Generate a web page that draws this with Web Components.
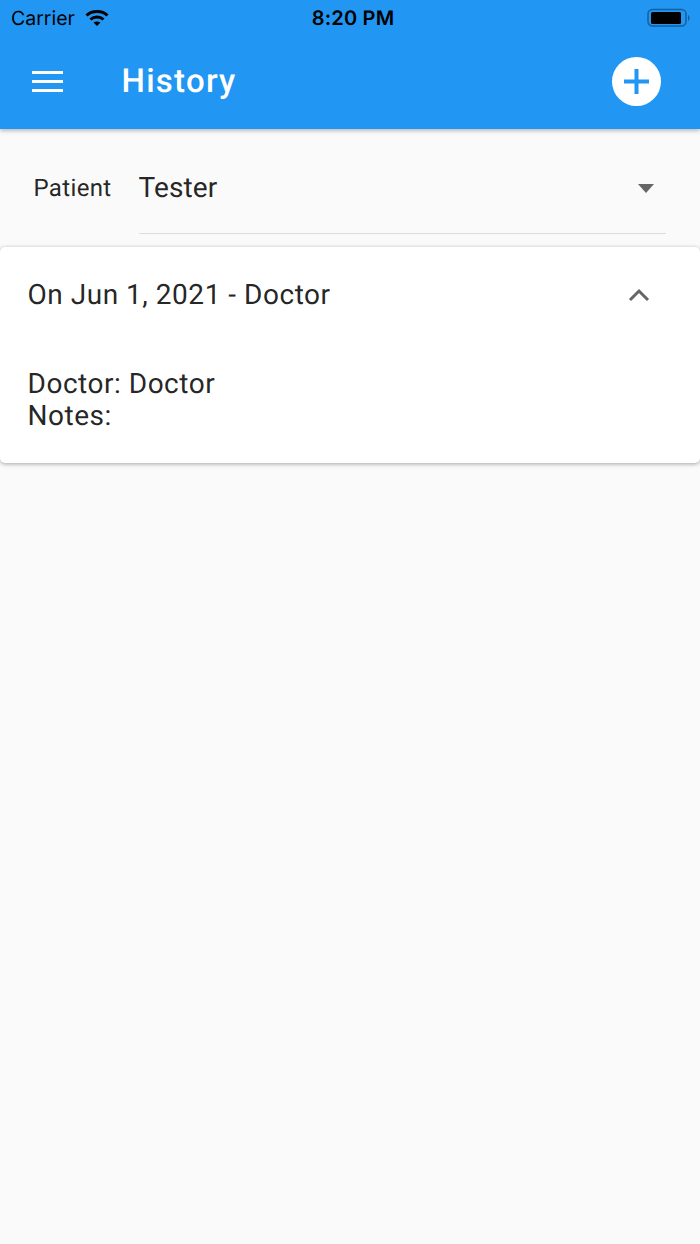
<!DOCTYPE html>
<html><head><meta charset="utf-8"><style>
html,body{margin:0;padding:0;height:100%;background:#fafafa;overflow:hidden}
body{width:700px;height:1244px;font-family:"Roboto",sans-serif;color:rgba(0,0,0,.87);text-rendering:geometricPrecision}
</style></head><body>
<app-bar></app-bar>
<patient-select></patient-select>
<history-card></history-card>
<script>
function el(name,html){customElements.define(name,class extends HTMLElement{constructor(){super();this.attachShadow({mode:'open'}).innerHTML=html}})}
el('status-bar',`<style>
:host{display:flex;height:36px;align-items:center;justify-content:space-between;padding:0 9px 0 11px;color:#000;position:relative}
.l{display:flex;align-items:center;gap:10px;font:400 19.500px "Inter","Liberation Sans",sans-serif}
.t{position:absolute;left:0;right:-6px;text-align:center;font:600 20px "Inter","Liberation Sans",sans-serif;letter-spacing:.2px}
svg{display:block}
</style>
<div class="l"><span>Carrier</span><svg width="24" height="18" viewBox="0 0 24 18"><g fill="none" stroke="#000" stroke-width="3"><path d="M1.500 6.500C7 1.300 17 1.300 22.500 6.500"/><path d="M5.500 10.500C9 7.300 15 7.300 18.500 10.500"/></g><path d="M8.500 13.500C10.500 12 13.500 12 15.500 13.500L12 17z" fill="#000"/></svg></div>
<div class="t">8:20 PM</div>
<svg width="44" height="20" viewBox="0 0 44 20"><rect x="1" y="1.500" width="38" height="16.500" rx="4.500" fill="none" stroke="#1a5f99" stroke-width="1.500"/><rect x="4" y="4" width="30" height="12" rx="1.500" fill="#000"/><path d="M41 7c2 .5 2 5.500 0 6z" fill="#1a5f99"/></svg>`);
el('app-bar',`<style>
:host{display:block;background:#2196f3;height:129px;box-shadow:0 2px 4px rgba(0,0,0,.25);position:relative;z-index:2}
.row{display:flex;align-items:center;height:91px;padding:0 39px 0 32px;color:#fff}
.title{font:500 33px/40px "Roboto",sans-serif;letter-spacing:1.250px;margin-left:58.500px;flex:1;padding-top:1px}
.add{width:49px;height:49px;border-radius:50%;background:#fff;display:flex;align-items:center;justify-content:center}
svg{display:block}
</style>
<status-bar></status-bar>
<div class="row"><svg width="31" height="21" viewBox="0 0 31 21"><path d="M0 1.500h31M0 10.500h31M0 19.500h31" stroke="#fff" stroke-width="3"/></svg><div class="title">History</div><div class="add"><svg width="25" height="25" viewBox="0 0 25 25"><path d="M12.500 0v25M0 12.500h25" stroke="#2196f3" stroke-width="4"/></svg></div></div>`);
el('patient-select',`<style>
:host{display:flex;align-items:flex-start;height:118px;padding:0 34px 0 33.500px}
.lab{font-size:24px;width:105px;padding-top:43px;line-height:32px;letter-spacing:.35px}
.box{flex:1;height:105px;border-bottom:1px solid #ddd;display:flex;justify-content:space-between;padding:43px 12px 0 0;box-sizing:border-box}
.v{font-size:28px;line-height:32px;letter-spacing:.1px}
.tri{width:0;height:0;border:8.500px solid transparent;border-top:9px solid #666;border-bottom:0;margin-top:12px}
</style><div class="lab">Patient</div><div class="box"><div class="v">Tester</div><div class="tri"></div></div>`);
el('history-card',`<style>
:host{display:block;background:#fff;border-radius:5px;box-shadow:0 1px 4px rgba(0,0,0,.35);height:216px;box-sizing:border-box;padding:0 28px 0 27.500px;font-size:28px;letter-spacing:.52px}
.h{display:flex;justify-content:space-between;align-items:center;height:95px;padding-right:22px}
.b{padding-top:26px;line-height:32px}
svg{display:block}
</style><div class="h"><span>On Jun 1, 2021 - Doctor</span><svg width="22" height="14" viewBox="0 0 22 14"><path d="M2 12 11 3l9 9" fill="none" stroke="#666" stroke-width="3"/></svg></div><div class="b">Doctor: Doctor<br>Notes:</div>`);
</script></body></html>
